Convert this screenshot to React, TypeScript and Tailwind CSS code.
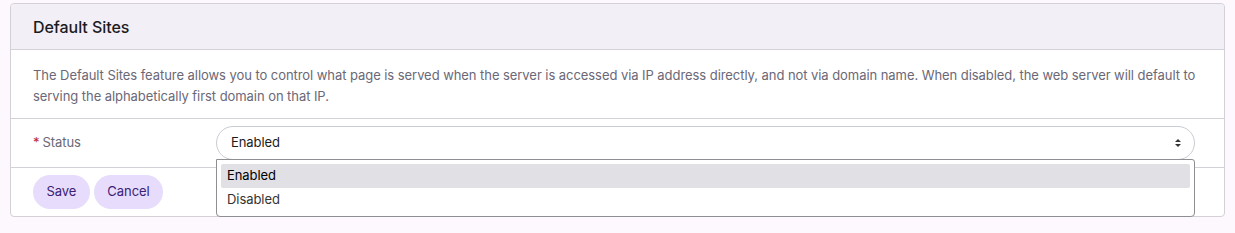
import React from "react";

export default function App() {
  return (
    <div className="min-h-[233px] w-full bg-[#fdf8fd] pt-[3px] pl-[10px] pr-[10px] tracking-[-0.06px]" style={{ fontFamily: "Inter, 'Noto Sans', sans-serif" }}>
      <div className="w-[1215px] rounded-[4px] border border-[#d3d0d8] bg-white">
        <div className="flex h-[46px] items-center rounded-t-[4px] border-b border-[#d3d0d8] bg-[#f3eff7] px-[22px]">
          <h2 className="text-[16px] font-medium text-[#1c1b22]">Default Sites</h2>
        </div>
        <div className="border-b border-[#d3d0d8] px-[22px] pt-[15px] pb-[11px]">
          <p className="text-[13px] leading-[21px] text-[#6a6877]">
            The Default Sites feature allows you to control what page is served when the server is accessed via IP address directly, and not via domain name. When disabled, the web server will default to serving the alphabetically first domain on that IP.
          </p>
        </div>
        <div className="flex items-center border-b border-[#d3d0d8] py-[7px] pl-[22px] pr-[29px]">
          <div className="w-[183px] text-[13px] text-[#6a6877]">
            <span className="mr-[3px] text-[#c0262d]">*</span>Status
          </div>
          <div className="relative flex-1">
            <div className="flex h-[34px] items-center justify-between rounded-full border border-[#c9ccd4] bg-white pl-[14px] pr-[12px] text-[13px] text-[#1c1b22]">
              <span>Enabled</span>
              <svg width="8" height="10" viewBox="0 0 8 10" className="text-[#333]">
                <path d="M4 1 L7 4 L1 4 Z" fill="currentColor" />
                <path d="M4 9 L7 6 L1 6 Z" fill="currentColor" />
              </svg>
            </div>
            <div className="absolute left-0 right-0 top-[33px] z-10 rounded-b-[4px] rounded-tr-[3px] border border-[#8e8e93] bg-white p-[4px] text-[13px] text-[#1c1b22]">
              <div className="flex h-[24px] items-center rounded-[2px] bg-[#e1e0e5] px-[6px] text-black">Enabled</div>
              <div className="flex h-[24px] items-center px-[6px] text-[#333]">Disabled</div>
            </div>
          </div>
        </div>
        <div className="flex gap-[4px] px-[22px] py-[7px]">
          <button className="h-[34px] rounded-full bg-[#e7dcfb] px-[13.5px] text-[13px] text-[#3a2176]">Save</button>
          <button className="h-[34px] rounded-full bg-[#e7dcfb] px-[13.5px] text-[13px] text-[#3a2176]">Cancel</button>
        </div>
      </div>
    </div>
  );
}
